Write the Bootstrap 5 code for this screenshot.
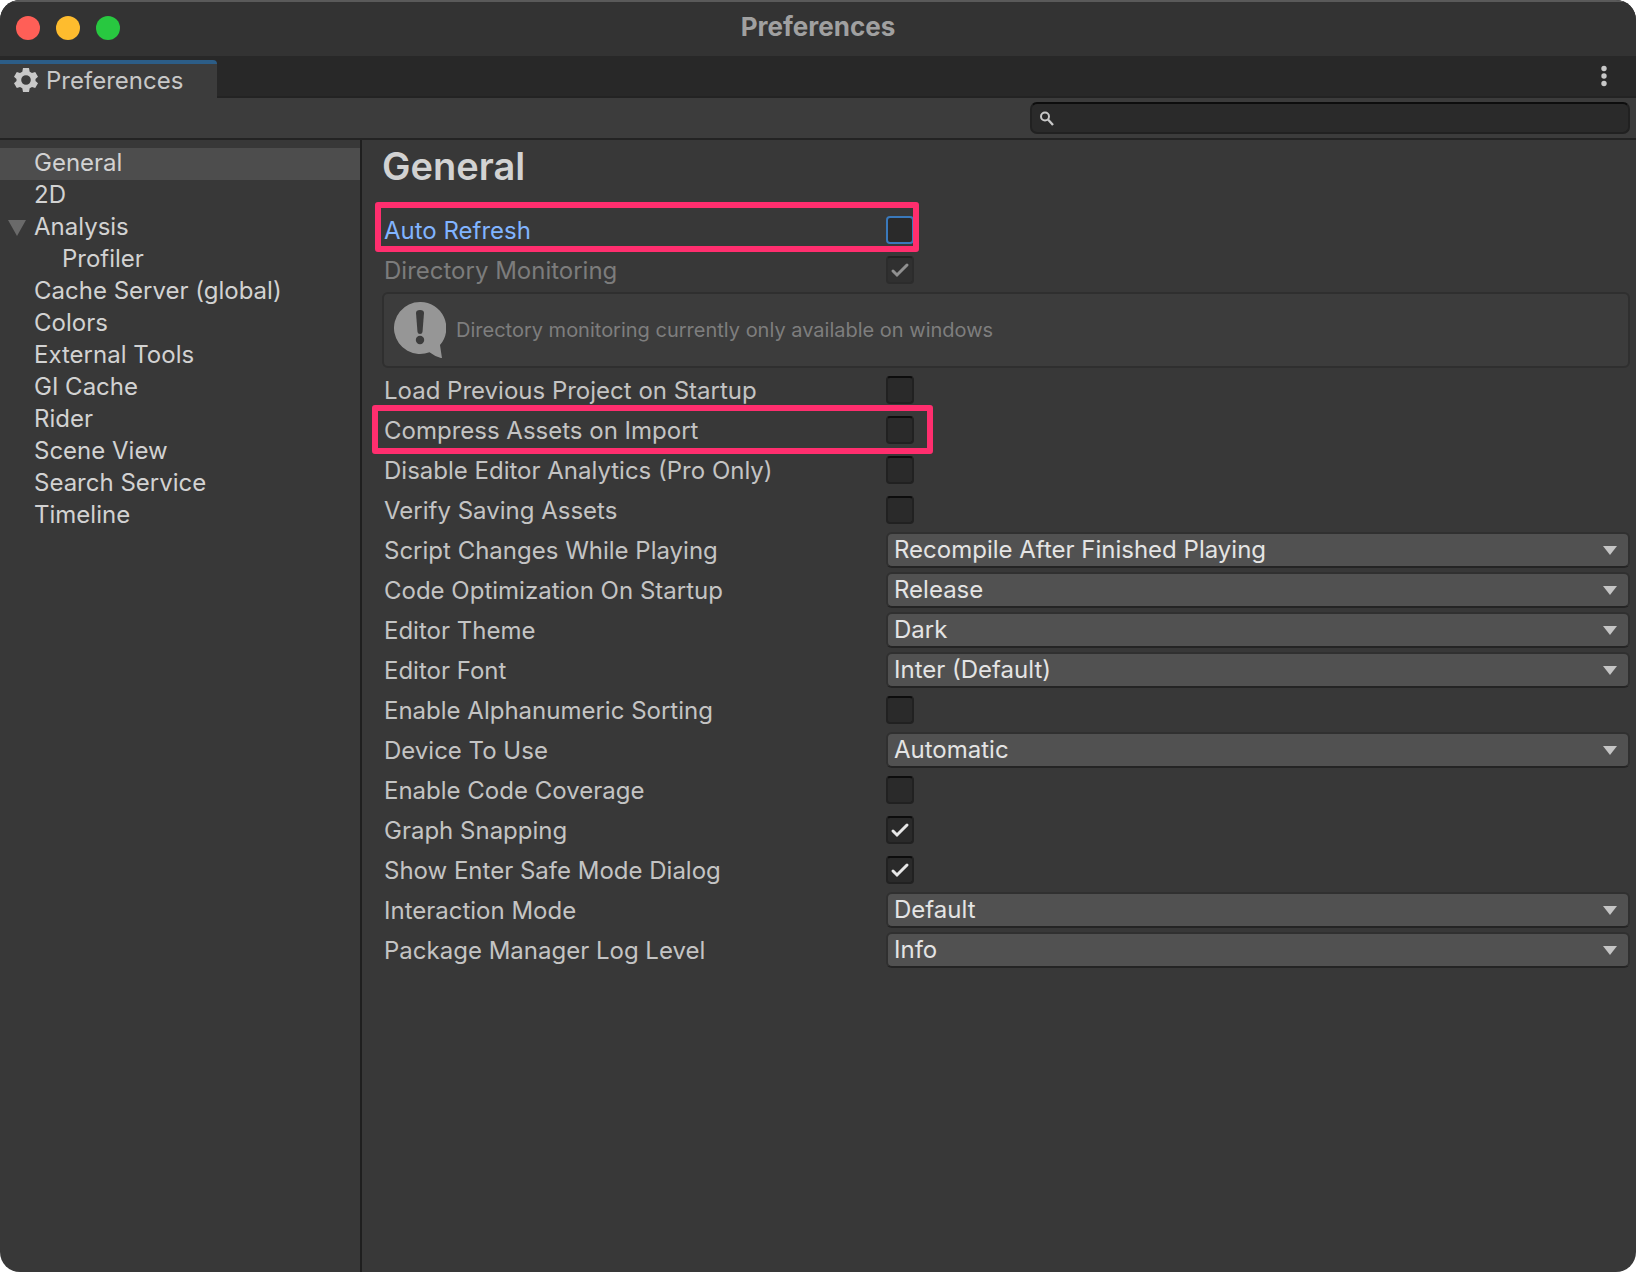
<!DOCTYPE html>
<html lang="en" data-bs-theme="dark">
<head>
<meta charset="utf-8">
<meta name="viewport" content="width=device-width, initial-scale=1">
<title>Preferences</title>
<link href="https://cdn.jsdelivr.net/npm/bootstrap@5.3.0/dist/css/bootstrap.min.css" rel="stylesheet">
<style>
  body { background: #fff; font-family: Inter, "Liberation Sans", sans-serif; font-size: 24px; line-height: 32px; color: #c4c4c4; }
  .app-window { background: #383838; border-radius: 20px; }
  .title-bar { height: 56px; background: #333; border-top: 2px solid #5a5a5a; padding: 0 16px; }
  .title-bar h1 { font-size: 26px; line-height: 32px; font-weight: 700; color: #a0a0a0; padding-bottom: 4px; }
  .lights { left: 16px; top: 14px; gap: 16px; }
  .light { width: 24px; height: 24px; border: 0; padding: 0; border-radius: 50%; }
  .light-close { background: #ff5f57; }
  .light-min { background: #febc2e; }
  .light-zoom { background: #28c840; }

  .tab-strip { height: 42px; background: #282828; padding-top: 4px; box-shadow: inset 0 -2px #232323; }
  .dock-tab { width: 217px; background: #3c3c3c; border-top: 4px solid #2c5d87; border-top-right-radius: 4px; padding-left: 14px; gap: 8px; color: #c8c8c8; }
  .dock-tab:hover { color: #fff; }
  .kebab { width: 64px; border: 0; background: none; padding: 0; }
  .tool-strip { height: 42px; background: #3c3c3c; border-bottom: 2px solid #232323; padding: 4px 6px; }
  .search-field { width: 600px; height: 32px; border: 2px solid #212121; border-top-color: #0d0d0d; border-radius: 7px; background: #2a2a2a; padding-left: 8px; }
  .search-field input { background: none; border: 0; outline: 0; color: #d2d2d2; font-size: 20px; line-height: 24px; }

  .side-list { width: 362px; border-right: 2px solid #1f1f1f; padding-top: 8px; }
  .side-list a { display: flex; align-items: center; height: 32px; padding: 0 0 2px 34px; color: #d2d2d2; text-decoration: none; }
  .side-list a.current { background: #4d4d4d; }
  .side-list a.nested { padding-left: 62px; }
  .side-list a.parent { padding-left: 8px; gap: 8px; }
  .side-list svg { margin-top: 2px; }

  .pane { padding: 0 6px 40px 20px; min-width: 0; }
  .pane h2 { font-size: 38px; line-height: 46px; font-weight: 600; color: #d2d2d2; padding: 3px 0 21px; }
  .pref-row { position: relative; height: 40px; }
  .pref-row > label { width: 504px; padding: 2px 0 0 2px; }
  .dimmed { color: #7c7c7c; }
  .focused { color: #81b4ff; }
  .pref-check { appearance: none; width: 28px; height: 28px; margin-bottom: 0; border: 2px solid #212121; border-top-color: #0d0d0d; border-radius: 4px; background: #2a2a2a border-box center / 28px 28px no-repeat; }
  .pref-check:checked { background-image: url("data:image/svg+xml,%3Csvg xmlns='http://www.w3.org/2000/svg' viewBox='0 0 28 28'%3E%3Cpath d='M7 15l4 4L21 9' fill='none' stroke='%23e8e8e8' stroke-width='3' stroke-linecap='round'/%3E%3C/svg%3E"); }
  .pref-check:disabled { opacity: .5; }
  .pref-check.has-focus { border-color: #3a79bb; outline: 0; }
  .pref-value { height: 36px; }
  .pref-value::after { content: ""; position: absolute; right: 13px; top: 14px; width: 14px; height: 9px; background: #c4c4c4; clip-path: polygon(0 0, 100% 0, 50% 100%); pointer-events: none; }
  .pref-select { appearance: none; display: block; width: 100%; height: 36px; border: 2px solid #303030; border-bottom-color: #242424; border-radius: 6px; background: #515151; color: #e4e4e4; font-size: 24px; line-height: 30px; padding: 0 32px 0 6px; }

  .help-box { height: 76px; margin: 2px 0; border: 2px solid #2f2f2f; border-radius: 6px; background: #3c3c3c; color: #7e7e7e; font-size: 20px; padding-left: 10px; gap: 10px; }

  .marker { position: absolute; border: 6px solid #ff2e6e; border-radius: 3px; pointer-events: none; }
  .marker-refresh { left: -7px; top: -8px; bottom: -2px; width: 544px; }
  .marker-compress { left: -10px; top: -5px; bottom: -4px; width: 561px; }
</style>
</head>
<body>
<div class="app-window d-flex flex-column min-vh-100 overflow-hidden">
  <header class="title-bar position-relative d-flex align-items-center justify-content-center">
    <div class="lights position-absolute d-flex">
      <button class="light light-close" aria-label="Close"></button>
      <button class="light light-min" aria-label="Minimize"></button>
      <button class="light light-zoom" aria-label="Zoom"></button>
    </div>
    <h1 class="m-0">Preferences</h1>
  </header>

  <div class="tab-strip d-flex justify-content-between">
    <a href="#" class="dock-tab d-flex align-items-center text-decoration-none">
      <svg width="24" height="26" viewBox="0 1 24 26" fill="#c8c8c8" aria-hidden="true"><path fill-rule="evenodd" d="M9 1h6l.7 3.700 2.300 1.400L21.200 5l2.800 4.800-2.500 2.300v1.800L24 16.200 21.200 21l-3.200-1.100-2.300 1.400L15 25H9l-.7-3.700L6 19.900 2.800 21 0 16.200l2.500-2.300v-1.800L0 9.800 2.800 5 6 6.100l2.300-1.400zM12 8.200a4.800 4.800 0 1 0 0 9.600a4.800 4.800 0 1 0 0-9.600z"/></svg>
      <span>Preferences</span>
    </a>
    <button class="kebab d-flex justify-content-center" aria-label="Tab menu">
      <svg width="6" height="32" viewBox="0 0 6 32" fill="#c8c8c8"><circle cx="3" cy="8.500" r="2.700"/><circle cx="3" cy="16" r="2.700"/><circle cx="3" cy="23.500" r="2.700"/></svg>
    </button>
  </div>

  <div class="tool-strip d-flex justify-content-end">
    <label class="search-field d-flex align-items-center">
      <svg width="14" height="15" viewBox="0 0 14 15" fill="none" stroke="#c8c8c8" stroke-width="2" aria-hidden="true"><circle cx="5" cy="5.500" r="4"/><path d="M8 8.500l5 5.500" stroke-width="2.300"/></svg>
      <input type="search" class="flex-grow-1" aria-label="Search preferences">
    </label>
  </div>

  <div class="d-flex flex-grow-1">
    <nav class="side-list flex-shrink-0">
      <a href="#" class="current" aria-current="page">General</a>
      <a href="#">2D</a>
      <a href="#" class="parent"><svg width="18" height="16" viewBox="0 0 18 16" fill="#6a6a6a" aria-hidden="true"><path d="M0 0h18L9 16z"/></svg>Analysis</a>
      <a href="#" class="nested">Profiler</a>
      <a href="#">Cache Server (global)</a>
      <a href="#">Colors</a>
      <a href="#">External Tools</a>
      <a href="#">GI Cache</a>
      <a href="#">Rider</a>
      <a href="#">Scene View</a>
      <a href="#">Search Service</a>
      <a href="#">Timeline</a>
    </nav>

    <main class="pane flex-grow-1">
      <h2 class="m-0">General</h2>
      <div class="pref-row d-flex align-items-center focused"><label for="p1">Auto Refresh</label><input type="checkbox" class="pref-check has-focus" id="p1"><span class="marker marker-refresh"></span></div>
      <div class="pref-row d-flex align-items-center dimmed"><label for="p2">Directory Monitoring</label><input type="checkbox" class="pref-check" id="p2" checked disabled></div>
      <div class="help-box d-flex align-items-center">
        <svg width="52" height="56" viewBox="0 0 52 56" aria-hidden="true"><path d="M26 0a26 26 0 1 0 9.500 50.200Q41 54.500 48 56.300L46 43A26 26 0 0 0 26 0z" fill="#969696"/><path d="M22 11q0-3 4-3t4 3l-1.500 19q-.3 2-2.500 2t-2.500-2z" fill="#3c3c3c"/><circle cx="26" cy="38" r="4.200" fill="#3c3c3c"/></svg>
        <span>Directory monitoring currently only available on windows</span>
      </div>
      <div class="pref-row d-flex align-items-center"><label for="p3">Load Previous Project on Startup</label><input type="checkbox" class="pref-check" id="p3"></div>
      <div class="pref-row d-flex align-items-center"><label for="p4">Compress Assets on Import</label><input type="checkbox" class="pref-check" id="p4"><span class="marker marker-compress"></span></div>
      <div class="pref-row d-flex align-items-center"><label for="p5">Disable Editor Analytics (Pro Only)</label><input type="checkbox" class="pref-check" id="p5"></div>
      <div class="pref-row d-flex align-items-center"><label for="p6">Verify Saving Assets</label><input type="checkbox" class="pref-check" id="p6"></div>
      <div class="pref-row d-flex align-items-center"><label for="p7">Script Changes While Playing</label><div class="pref-value position-relative flex-grow-1"><select class="pref-select" id="p7"><option>Recompile After Finished Playing</option></select></div></div>
      <div class="pref-row d-flex align-items-center"><label for="p8">Code Optimization On Startup</label><div class="pref-value position-relative flex-grow-1"><select class="pref-select" id="p8"><option>Release</option></select></div></div>
      <div class="pref-row d-flex align-items-center"><label for="p9">Editor Theme</label><div class="pref-value position-relative flex-grow-1"><select class="pref-select" id="p9"><option>Dark</option></select></div></div>
      <div class="pref-row d-flex align-items-center"><label for="p10">Editor Font</label><div class="pref-value position-relative flex-grow-1"><select class="pref-select" id="p10"><option>Inter (Default)</option></select></div></div>
      <div class="pref-row d-flex align-items-center"><label for="p11">Enable Alphanumeric Sorting</label><input type="checkbox" class="pref-check" id="p11"></div>
      <div class="pref-row d-flex align-items-center"><label for="p12">Device To Use</label><div class="pref-value position-relative flex-grow-1"><select class="pref-select" id="p12"><option>Automatic</option></select></div></div>
      <div class="pref-row d-flex align-items-center"><label for="p13">Enable Code Coverage</label><input type="checkbox" class="pref-check" id="p13"></div>
      <div class="pref-row d-flex align-items-center"><label for="p14">Graph Snapping</label><input type="checkbox" class="pref-check" id="p14" checked></div>
      <div class="pref-row d-flex align-items-center"><label for="p15">Show Enter Safe Mode Dialog</label><input type="checkbox" class="pref-check" id="p15" checked></div>
      <div class="pref-row d-flex align-items-center"><label for="p16">Interaction Mode</label><div class="pref-value position-relative flex-grow-1"><select class="pref-select" id="p16"><option>Default</option></select></div></div>
      <div class="pref-row d-flex align-items-center"><label for="p17">Package Manager Log Level</label><div class="pref-value position-relative flex-grow-1"><select class="pref-select" id="p17"><option>Info</option></select></div></div>
    </main>
  </div>
</div>
<script src="https://cdn.jsdelivr.net/npm/bootstrap@5.3.0/dist/js/bootstrap.bundle.min.js"></script>
</body>
</html>
